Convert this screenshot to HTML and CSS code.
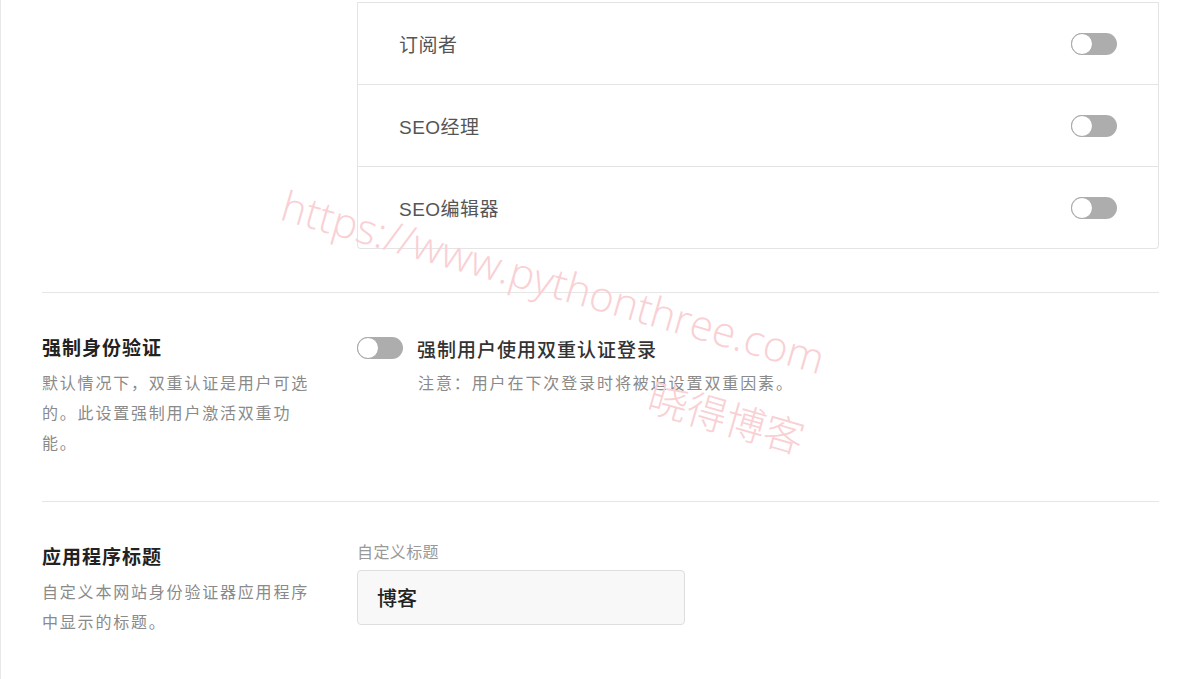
FILE: index.html
```html
<!DOCTYPE html>
<html lang="zh-CN">
<head>
  <meta charset="UTF-8" />
  <meta name="viewport" content="width=device-width, initial-scale=1.0">
  <title>双重认证设置</title>
  <link rel="stylesheet" href="styles.css">
</head>
<body>
  <div class="page">
    <!-- 角色列表 -->
    <div class="setting setting-roles">
      <div class="setting-info"></div>
      <div class="roles">
        <div class="role-row">
          <span class="role-name">订阅者</span>
          <span class="toggle"></span>
        </div>
        <div class="role-row">
          <span class="role-name">SEO经理</span>
          <span class="toggle"></span>
        </div>
        <div class="role-row">
          <span class="role-name">SEO编辑器</span>
          <span class="toggle"></span>
        </div>
      </div>
    </div>

    <!-- 强制身份验证 -->
    <div class="setting">
      <div class="setting-info">
        <h3>强制身份验证</h3>
        <p>默认情况下，双重认证是用户可选的。此设置强制用户激活双重功能。</p>
      </div>
      <div class="setting-control">
        <label class="check">
          <span class="toggle"></span>
          <span class="check-label">强制用户使用双重认证登录</span>
        </label>
        <p class="note">注意：用户在下次登录时将被迫设置双重因素。</p>
      </div>
    </div>

    <!-- 应用程序标题 -->
    <div class="setting setting-last">
      <div class="setting-info">
        <h3>应用程序标题</h3>
        <p>自定义本网站身份验证器应用程序中显示的标题。</p>
      </div>
      <div class="setting-control">
        <div class="field-label">自定义标题</div>
        <input class="field-input" type="text" value="博客">
      </div>
    </div>

    <!-- 水印 -->
    <div class="watermark watermark-url">https://www.pythonthree.com</div>
    <div class="watermark watermark-name">晓得博客</div>
  </div>
</body>
</html>
```

FILE: styles.css
```css
/* 基本样式 */
body {
  margin: 0;
  padding: 0;
  background-color: #fff;
  color: #333;
  font-family: "Liberation Sans", "Noto Sans CJK SC", sans-serif;
  overflow: hidden;
}

.page {
  position: relative;
  height: 679px;
  border-left: 1px solid #e8e8e8;
  padding: 0 41px 0 41px;
}

/* 设置行 */
.setting {
  display: grid;
  grid-template-columns: 315px 1fr;
  padding: 42px 0;
  border-bottom: 1px solid #e6e6e6;
}

.setting-roles {
  padding-top: 2px;
  padding-bottom: 43px;
}

.setting-last {
  border-bottom: none;
}

.setting-info h3 {
  margin: 0;
  font-size: 19px;
  line-height: 28px;
  letter-spacing: 1px;
  font-weight: bold;
  color: #222;
}

.setting-info p {
  margin: 6px 0 0;
  max-width: 272px;
  font-size: 16px;
  line-height: 30px;
  letter-spacing: 1.8px;
  color: #8a8a8a;
}

/* 角色列表 */
.roles {
  border: 1px solid #e4e4e4;
  border-top: none;
  border-radius: 0 0 4px 4px;
}

.role-row {
  display: flex;
  align-items: center;
  justify-content: space-between;
  height: 81px;
  padding: 0 41px;
  border-top: 1px solid #e4e4e4;
}

.role-name {
  font-size: 19px;
  letter-spacing: 0.5px;
  color: #555;
}

/* 开关 */
.toggle {
  position: relative;
  display: inline-block;
  width: 46px;
  height: 22px;
  border-radius: 11px;
  background-color: #adadad;
  flex-shrink: 0;
}

.toggle::before {
  content: "";
  position: absolute;
  left: 0;
  top: 0;
  width: 20px;
  height: 20px;
  border: 1px solid #a8a8a8;
  border-radius: 50%;
  background-color: #fff;
}

/* 复选项 */
.check {
  display: flex;
  align-items: center;
  gap: 14px;
  height: 26px;
}

.check-label {
  font-size: 19px;
  letter-spacing: 1px;
  font-weight: 500;
  color: #333;
}

.note {
  margin: 8px 0 0 61px;
  font-size: 16px;
  line-height: 30px;
  letter-spacing: 1.9px;
  color: #8a8a8a;
}

/* 输入框 */
.field-label {
  margin-top: -2px;
  font-size: 16px;
  line-height: 22px;
  letter-spacing: 0.4px;
  color: #999;
}

.field-input {
  display: block;
  box-sizing: border-box;
  width: 328px;
  height: 55px;
  margin-top: 6px;
  padding: 0 19px;
  border: 1px solid #dedede;
  border-radius: 4px;
  background-color: #f8f8f8;
  font-family: "Liberation Sans", "Noto Sans CJK SC", sans-serif;
  font-size: 20px;
  font-weight: 500;
  color: #222;
}

/* 水印 */
.watermark {
  position: absolute;
  color: #f9d0d4;
  white-space: nowrap;
  pointer-events: none;
  transform-origin: left top;
  transform: rotate(16deg);
  font-family: "Open Sans", "Noto Sans CJK SC", sans-serif;
  font-weight: 300;
}

.watermark-url {
  left: 290px;
  top: 176px;
  font-size: 42px;
}

.watermark-name {
  left: 657px;
  top: 366px;
  font-size: 40px;
}
```
